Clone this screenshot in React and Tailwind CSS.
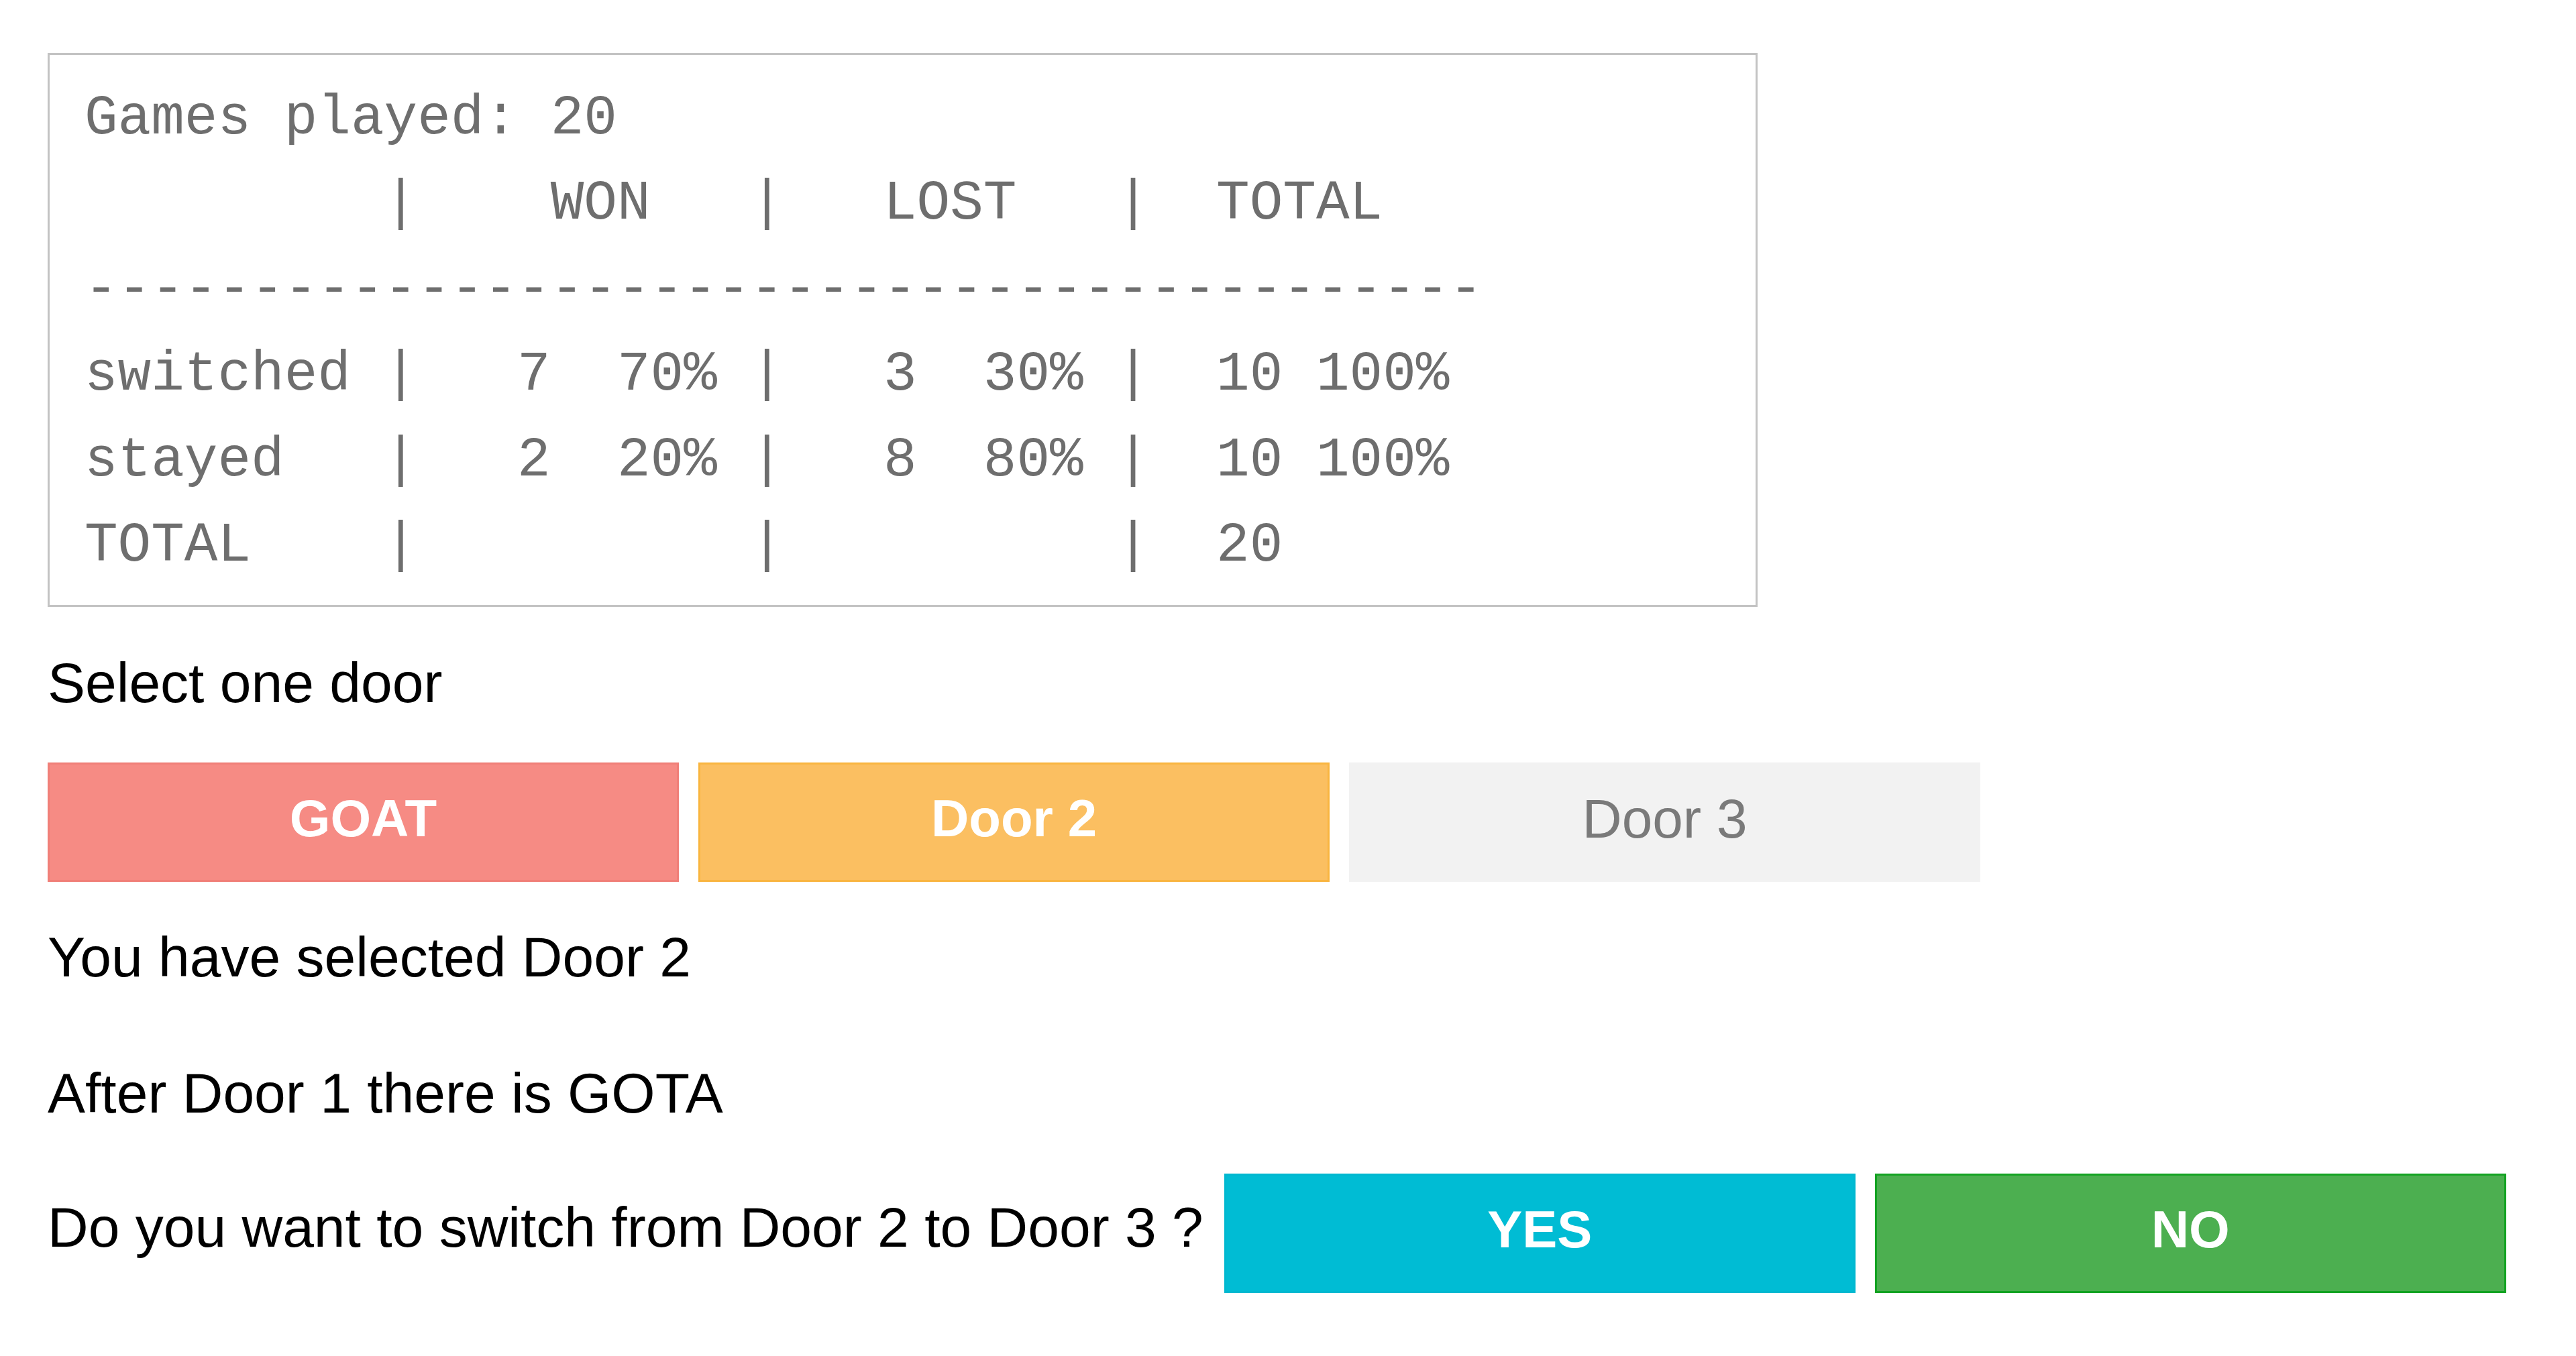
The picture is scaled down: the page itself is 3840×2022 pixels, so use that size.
import React from "react";

const statsLines = [
  "Games played: 20",
  "         |    WON   |   LOST   |  TOTAL",
  "------------------------------------------",
  "switched |   7  70% |   3  30% |  10 100%",
  "stayed   |   2  20% |   8  80% |  10 100%",
  "TOTAL    |          |          |  20",
];

const sans = { fontFamily: '"Liberation Sans", Arial, Helvetica, sans-serif' };
const mono = { fontFamily: '"Liberation Mono", "Courier New", monospace' };

function DoorButton({ label, className }) {
  return (
    <button
      type="button"
      className={`flex h-[178px] w-[941px] shrink-0 items-center justify-center pb-[11px] ${className}`}
      style={sans}
    >
      {label}
    </button>
  );
}

export default function App() {
  return (
    <div className="min-h-[2022px] w-full bg-white pl-[71px] text-black" style={sans}>
      {/* scoreboard */}
      <div className="pt-[79px]">
        <div
          className="w-[2549px] border-[3px] border-[#c3c3c3] pl-[52px] pt-[32px] pb-[24px] text-[82.7px] leading-[127.4px] text-[#6e6e6e]"
          style={mono}
        >
          {statsLines.map((line, i) => (
            <div key={i} className="whitespace-pre">
              {line}
            </div>
          ))}
        </div>
      </div>

      <p className="mt-[65px] text-[84px] leading-[96px]">Select one door</p>

      <div className="mt-[71px] flex gap-[29px]">
        <DoorButton
          label="GOAT"
          className="border-[3px] border-[#f07f78] bg-[#f68b84] text-[78px] font-bold text-white"
        />
        <DoorButton
          label="Door 2"
          className="border-[3px] border-[#f9b540] bg-[#fbbf61] text-[78px] font-bold text-white"
        />
        <DoorButton
          label="Door 3"
          className="bg-[#f2f2f2] text-[82px] text-[#7a7a7a]"
        />
      </div>

      <p className="mt-[64px] text-[84px] leading-[96px]">You have selected Door 2</p>

      <p className="mt-[107px] text-[84px] leading-[96px]">After Door 1 there is GOTA</p>

      <div className="mt-[72px] flex items-start gap-[31px]">
        <p className="mt-[32px] whitespace-nowrap text-[84px] leading-[96px]">
          Do you want to switch from Door 2 to Door 3 ?
        </p>
        <div className="flex gap-[29px]">
          <DoorButton
            label="YES"
            className="border-[3px] border-[#00b8d0] bg-[#00bcd4] text-[78px] font-bold text-white"
          />
          <DoorButton
            label="NO"
            className="border-[3px] border-[#13a322] bg-[#4caf50] text-[78px] font-bold text-white"
          />
        </div>
      </div>
    </div>
  );
}
